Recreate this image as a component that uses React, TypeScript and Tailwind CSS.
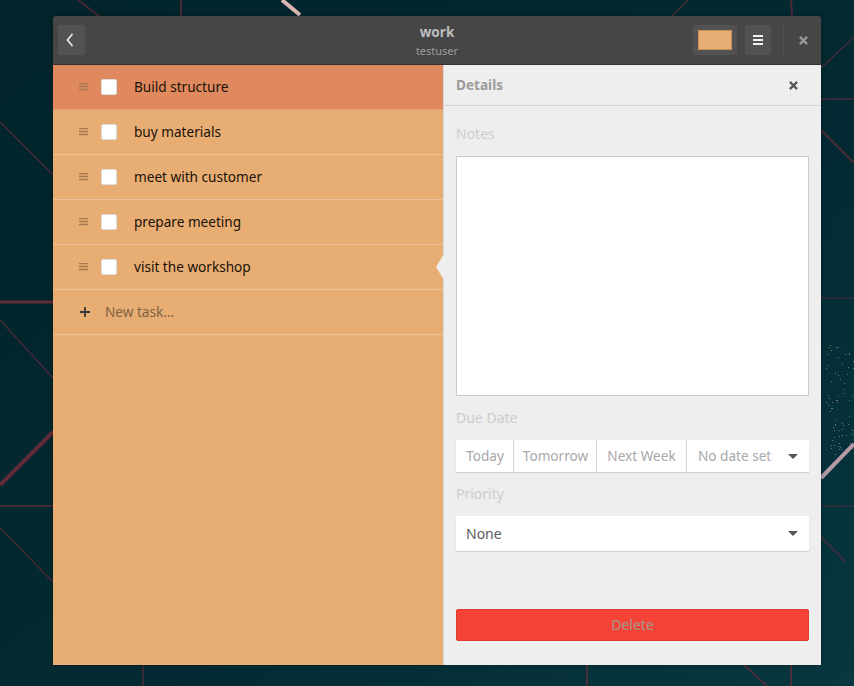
import React from 'react';

const tasks = ['Build structure', 'buy materials', 'meet with customer', 'prepare meeting', 'visit the workshop'];

// wallpaper streaks
const lines = [
  [78, 0, 100, 17, 2], [181, 0, 181, 17, 2], [672, 16, 688, 0, 1.5], [791, 0, 792, 16, 2],
  [0, 122, 53, 175, 1.5], [0, 302, 53, 302, 3], [0, 320, 53, 378, 1.5], [0, 485, 53, 432, 4],
  [0, 506, 53, 506, 2], [0, 528, 53, 582, 1.5], [821, 68, 854, 37, 1.5], [821, 99, 854, 99, 1.5],
  [821, 130, 854, 163, 2], [821, 298, 854, 298, 1], [821, 506, 854, 506, 1], [821, 537, 846, 562, 1.5],
  [587, 665, 587, 686, 2], [744, 665, 767, 686, 2], [791, 665, 791, 686, 2], [143, 665, 143, 686, 1.5],
];

// scattered specks, bottom right of the wallpaper
const hash = (n: number) => {
  const v = Math.sin(n * 12.9898) * 43758.5453;
  return v - Math.floor(v);
};
const dots = Array.from({ length: 70 }, (_, i) => ({
  x: Math.round(826 + hash(i + 1) * 28),
  y: Math.round(345 + hash(i + 101) * 110),
}));

function Wallpaper() {
  return (
    <svg className="absolute inset-0 w-[854px] h-[686px]" viewBox="0 0 854 686">
      <defs>
        <linearGradient id="wall" x1="0" y1="0" x2="1" y2="1">
          <stop offset="0" stopColor="#02232a" />
          <stop offset="0.6" stopColor="#032a32" />
          <stop offset="1" stopColor="#083740" />
        </linearGradient>
      </defs>
      <rect width="854" height="686" fill="url(#wall)" />
      {lines.map(([x1, y1, x2, y2, w], i) => (
        <line key={i} x1={x1} y1={y1} x2={x2} y2={y2} stroke="#6d2c3a" strokeWidth={w} opacity={w > 2 ? 0.9 : 0.65} />
      ))}
      <line x1="282" y1="0" x2="300" y2="15" stroke="#d9b8b4" strokeWidth="4" />
      <line x1="821" y1="478" x2="854" y2="444" stroke="#b49aa6" strokeWidth="4" />
      {dots.map((d, i) => (
        <rect key={i} x={d.x} y={d.y} width="1" height="1" fill="#9a8f8f" opacity="0.7" />
      ))}
    </svg>
  );
}

function DragHandle() {
  return (
    <svg width="9" height="8" viewBox="0 0 9 8" className="shrink-0">
      <path d="M0 .5h9M0 3.5h9M0 6.5h9" stroke="#a9794f" strokeWidth="1.5" />
    </svg>
  );
}

function Cross({ size, color, stroke = 2 }: { size: number; color: string; stroke?: number }) {
  return (
    <svg width={size} height={size} viewBox="0 0 8 8">
      <path d="M.8.8l6.4 6.4M7.2.8L.8 7.2" stroke={color} strokeWidth={stroke} />
    </svg>
  );
}

function Caret() {
  return (
    <svg width="10" height="5" viewBox="0 0 10 5">
      <path d="M0 0h10L5 5z" fill="#555" />
    </svg>
  );
}

export default function App() {
  return (
    <div className="relative w-[854px] h-[686px] overflow-hidden font-['Noto_Sans',sans-serif] text-[14px]">
      <Wallpaper />
      <div className="relative ml-[53px] pt-[16px] w-[768px]">
        <div className="h-[649px] flex flex-col rounded-t-[3px] overflow-hidden shadow-[0_0_5px_rgba(0,0,0,0.3)]">
          {/* header */}
          <header className="h-[49px] shrink-0 bg-[#464646] flex items-center pl-[5px] pr-0 border-b border-[#333]">
            <button className="w-[27px] h-[30px] bg-[#525252] rounded-[2px] flex items-center justify-center pr-[3px]">
              <svg width="8" height="14" viewBox="0 0 8 14">
                <path d="M6.5 1L1.5 7l5 6" fill="none" stroke="#eee" strokeWidth="1.6" />
              </svg>
            </button>
            <div className="flex-1 flex flex-col items-center pl-[96px]">
              <span className="text-[13.6px] leading-[18px] font-bold text-[#bdbdbd]">work</span>
              <span className="text-[11px] leading-[15px] mt-[2px] text-[#9c9c9c]">testuser</span>
            </div>
            <button className="w-[44px] h-[30px] bg-[#525252] rounded-[2px] flex items-center justify-center">
              <span className="block w-[34px] h-[20px] bg-[#e8ad73] border border-[#c69058]"></span>
            </button>
            <button className="w-[26px] h-[30px] ml-[8px] bg-[#525252] rounded-[2px] flex items-center justify-center">
              <svg width="10" height="10" viewBox="0 0 10 10">
                <path d="M0 1h10M0 5h10M0 9h10" stroke="#f2f2f2" strokeWidth="2" />
              </svg>
            </button>
            <div className="ml-[12px] w-[38px] h-[30px] border-l border-[#505050] flex items-center justify-end pr-[13px]">
              <Cross size={9} color="#9a9a9a" />
            </div>
          </header>

          <div className="flex-1 flex min-h-0">
            {/* task list */}
            <div className="relative w-[391px] shrink-0 bg-[#e8ad73] border-r border-[#d9d9d9] text-[13.6px]">
              {tasks.map((t, i) => (
                <div
                  key={t}
                  className={`h-[45px] flex items-center pl-[26px] border-b ${i === 0 ? 'bg-[#e0895e] border-[#e0a078]' : 'border-[#ecc29b]'}`}
                >
                  <DragHandle />
                  <span className="w-[16px] h-[16px] ml-[13px] rounded-[2px] bg-white border border-[#ddd]"></span>
                  <span className="ml-[17px] text-[#1a1208]">{t}</span>
                </div>
              ))}
              <div className="h-[45px] flex items-center pl-[27px] border-b border-[#ecc29b]">
                <svg width="10" height="10" viewBox="0 0 10 10">
                  <path d="M5 0v10M0 5h10" stroke="#3a3a3a" strokeWidth="1.8" />
                </svg>
                <span className="ml-[15px] text-[#7f6242]">New task...</span>
              </div>
              <span className="absolute left-[383px] top-[189px] w-[8px] h-[26px] bg-[#eeeeee] [clip-path:polygon(100%_0,0_50%,100%_100%)]"></span>
            </div>

            {/* details */}
            <div className="flex-1 bg-[#eeeeee] flex flex-col min-w-0">
              <div className="h-[41px] shrink-0 flex items-center justify-between pl-[12px] pr-[23px] border-b border-[#d2d2d2]">
                <span className="text-[13.6px] font-bold text-[#9b9b9b]">Details</span>
                <Cross size={9} color="#555" />
              </div>
              <div className="flex-1 flex flex-col px-[12px]">
                <span className="mt-[18px] leading-[20px] text-[#cdcdcd]">Notes</span>
                <div className="mt-[12px] h-[240px] bg-white border border-[#c9c9c9]"></div>
                <span className="mt-[12px] leading-[20px] text-[#cdcdcd]">Due Date</span>
                <div className="mt-[12px] h-[32px] flex bg-white text-[#a8a8a8] text-[13.6px] shadow-[0_1px_1px_rgba(0,0,0,0.12)]">
                  <span className="w-[58px] pl-[1px] flex items-center justify-center border-r border-[#d6d6d6]">Today</span>
                  <span className="w-[83px] pl-[1px] flex items-center justify-center border-r border-[#d6d6d6]">Tomorrow</span>
                  <span className="w-[90px] flex items-center justify-center border-r border-[#d6d6d6]">Next Week</span>
                  <span className="flex-1 flex items-center justify-between pl-[11px] pr-[11px]">
                    No date set
                    <Caret />
                  </span>
                </div>
                <span className="mt-[12px] leading-[20px] text-[#cdcdcd]">Priority</span>
                <div className="mt-[12px] h-[35px] flex items-center justify-between bg-white pl-[10px] pr-[11px] text-[#5a5a5a] shadow-[0_1px_1px_rgba(0,0,0,0.12)]">
                  None
                  <Caret />
                </div>
                <button className="mt-[58px] h-[32px] w-full pb-[2px] bg-[#f44336] border border-[#dc3d31] rounded-[2px] text-[#a39a8e]">
                  Delete
                </button>
              </div>
            </div>
          </div>
        </div>
      </div>
    </div>
  );
}
